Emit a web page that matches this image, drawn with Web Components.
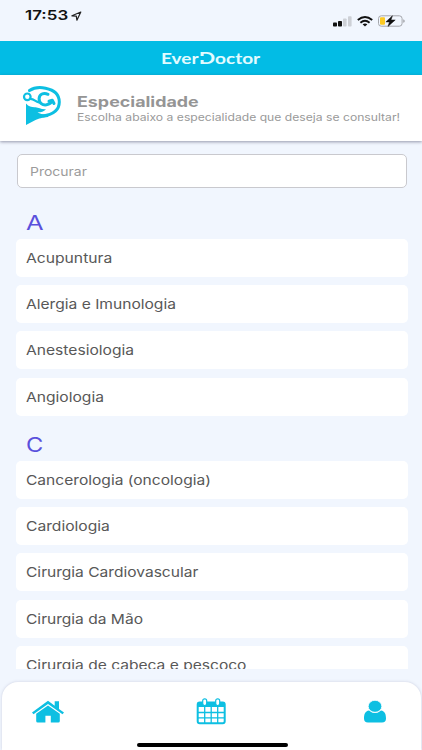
<!DOCTYPE html>
<html lang="pt-BR">
<head>
<meta charset="utf-8">
<meta name="viewport" content="width=device-width, initial-scale=1">
<title>EverDoctor</title>
<style>
  body {
    margin: 0;
    background-color: #f1f6fe;
    font-family: Inter, "Liberation Sans", sans-serif;
    color: #585858;
  }
</style>
</head>
<body>
<doctor-app></doctor-app>

<script>
// Text drawn wider than the font, up to the given width in pixels
class WideText extends HTMLElement {
  constructor() {
    super();
    this.shadowDOM = this.attachShadow({ mode: "open" });
  }

  connectedCallback() {
    this.shadowDOM.innerHTML = `
    <style>
    :host {
      display: block;
      white-space: nowrap;
    }

    span {
      display: inline-block;
      transform-origin: 0 50%;
    }
    </style>
    <span><slot></slot></span>`;

    const span = this.shadowDOM.querySelector("span");
    const width = Number(this.getAttribute("width"));
    if (width) {
      this.style.width = `${width}px`;
      span.style.transform = `scaleX(${width / span.offsetWidth})`;
    }
  }
}

class StatusBar extends HTMLElement {
  constructor() {
    super();
    this.shadowDOM = this.attachShadow({ mode: "open" });
  }

  connectedCallback() {
    this.shadowDOM.innerHTML = `
    <style>
    :host {
      display: flex;
      flex: none;
      justify-content: space-between;
      box-sizing: border-box;
      height: 41px;
      padding: 7px 17px 0 25px;
      color: #111;
    }

    .time {
      display: flex;
      height: 17px;
      align-items: center;
      gap: 3px;
      font-size: 13px;
      font-weight: 600;
      line-height: 17px;
    }

    .icons {
      display: flex;
      height: 12px;
      margin-top: 8px;
      align-items: center;
      gap: 5px;
    }

    svg {
      display: block;
    }
    </style>
    <div class="time">
      <wide-text width="43">17:53</wide-text>
      <svg width="11" height="10" viewBox="0 0 11 10">
        <path d="M.9 4.8 9.8 1 5.9 9.2 5.3 5.2Z" fill="none" stroke="#222" stroke-width="1.2" stroke-linejoin="round"/>
      </svg>
    </div>
    <div class="icons">
      <svg width="19" height="11" viewBox="0 0 19 11">
        <rect x="0" y="6.5" width="4" height="4" rx=".8" fill="#111"/>
        <rect x="5" y="5" width="4" height="5.5" rx=".8" fill="#111"/>
        <rect x="10" y="2.5" width="3.6" height="8" rx=".8" fill="#cdd0d6"/>
        <rect x="15" y="0.3" width="3.6" height="10.2" rx=".8" fill="#cdd0d6"/>
      </svg>
      <svg width="16" height="11" viewBox="0 0 16 11">
        <g fill="none" stroke="#111" stroke-width="1.9">
          <path d="M.8 4Q8-2 15.2 4"/>
          <path d="M3.4 6.7Q8 2.8 12.6 6.7"/>
        </g>
        <path d="M5.6 8.3Q8 6.6 10.4 8.3L8 10.6Z" fill="#111"/>
      </svg>
      <svg width="27" height="12" viewBox="0 0 27 12">
        <rect x=".5" y=".8" width="23.6" height="10.4" rx="2.8" fill="none" stroke="#a4a6ab"/>
        <path d="M25.2 4.2Q26.8 4.6 26.8 6T25.2 7.8Z" fill="#a4a6ab"/>
        <rect x="2" y="2.2" width="5" height="7.6" rx="1" fill="#fcca23"/>
        <path d="M14.4.8 7.9 6.9H11.5L10 11.4 17.2 5H13Z" fill="#111" stroke="#111" stroke-width=".5"/>
      </svg>
    </div>`;
  }
}

class BrandBar extends HTMLElement {
  constructor() {
    super();
    this.shadowDOM = this.attachShadow({ mode: "open" });
  }

  connectedCallback() {
    this.shadowDOM.innerHTML = `
    <style>
    :host {
      display: flex;
      flex: none;
      box-sizing: border-box;
      height: 34px;
      padding-right: 1px;
      align-items: center;
      justify-content: center;
      background-color: #02bce5;
      color: #e2fbff;
      font: 700 15px/20px Lato, sans-serif;
    }

    .d {
      position: relative;
      font-size: 17px;
    }

    /* notch cut in the stem of the D */
    .d::before {
      content: "";
      position: absolute;
      left: 0;
      top: 9px;
      width: 4px;
      height: 4px;
      background-color: #02bce5;
    }
    </style>
    <wide-text width="99">Ever<span class="d">D</span>octor</wide-text>`;
  }
}

class PageHeading extends HTMLElement {
  constructor() {
    super();
    this.shadowDOM = this.attachShadow({ mode: "open" });
  }

  connectedCallback() {
    this.shadowDOM.innerHTML = `
    <style>
    :host {
      display: flex;
      flex: none;
      box-sizing: border-box;
      height: 66px;
      padding: 11px 0 0 22px;
      gap: 16px;
      background-color: #fff;
      box-shadow: 0 1px 3px rgba(60, 60, 90, 0.5);
      color: #999;
    }

    .title {
      margin-top: 7px;
      font-size: 14.5px;
      font-weight: 700;
      line-height: 18px;
      color: #959595;
    }

    .hint {
      font-size: 10.5px;
      line-height: 14px;
    }
    </style>
    <svg width="39" height="40" viewBox="0 0 39 40">
      <g fill="none" stroke="#0dbfe2" stroke-linecap="round" stroke-linejoin="round">
        <circle cx="5.3" cy="10.8" r="3.3" stroke-width="2.2"/>
        <path d="M7.5 4.6C12 1.5 19 1.3 23.500 2.200 32.500 4 37.300 9 37.300 16 37.300 24 31 28.500 21 30" stroke-width="3"/>
        <path d="M26 8.300C21.500 6 17.300 8.500 17.100 12.500 17 17 20.500 19.500 24.500 18.800 27.500 18.200 29.500 16.500 30.300 14.500M27 15.300 30.300 14.300 32 17.500" stroke-width="3"/>
        <path d="M8.500 12.800C12.500 13 13 15.500 17 16.500" stroke-width="2.200"/>
      </g>
      <path d="M4 17.500C7 21 10 21.300 13.500 21.200 17 21.300 19 23.800 24 23.300 21.500 26 18 26.500 15.500 26.300 19 28.500 23 29 27 28.200L26 31C20 31.500 17 32.500 13.500 34L4 39Z" fill="#0dbfe2"/>
    </svg>
    <div>
      <wide-text class="title" width="122">Especialidade</wide-text>
      <wide-text class="hint" width="323">Escolha abaixo a especialidade que deseja se consultar!</wide-text>
    </div>`;
  }
}

class SearchField extends HTMLElement {
  constructor() {
    super();
    this.shadowDOM = this.attachShadow({ mode: "open" });
  }

  connectedCallback() {
    this.shadowDOM.innerHTML = `
    <style>
    :host {
      display: flex;
      flex: none;
      box-sizing: border-box;
      height: 34px;
      margin: 13px 15px 0 17px;
      padding-left: 12px;
      align-items: center;
      border: 1px solid #c9c9ce;
      border-radius: 5px;
      background-color: #fff;
      color: #9b9b9b;
      font-size: 12px;
    }
    </style>
    <wide-text width="57">Procurar</wide-text>`;
  }
}

class SpecialtyItem extends HTMLElement {
  constructor() {
    super();
    this.shadowDOM = this.attachShadow({ mode: "open" });
  }

  connectedCallback() {
    this.shadowDOM.innerHTML = `
    <style>
    :host {
      display: flex;
      box-sizing: border-box;
      height: 38px;
      padding-left: 10px;
      align-items: center;
      border-radius: 5px;
      background-color: #fff;
      font-size: 13.3px;
    }
    </style>
    <wide-text width="${this.getAttribute("width")}"><slot></slot></wide-text>`;
  }
}

class SpecialtyGroup extends HTMLElement {
  constructor() {
    super();
    this.shadowDOM = this.attachShadow({ mode: "open" });
  }

  connectedCallback() {
    this.shadowDOM.innerHTML = `
    <style>
    :host {
      display: flex;
      flex-direction: column;
      gap: 8.2px;
    }

    .letter {
      margin: 0 0 -7.2px 9.5px;
      height: 30px;
      line-height: 30px;
      font-size: 19.5px;
      color: #5a50dc;
    }
    </style>
    <wide-text class="letter" width="17">${this.getAttribute("letter")}</wide-text>
    <slot></slot>`;
  }
}

class TabBar extends HTMLElement {
  constructor() {
    super();
    this.shadowDOM = this.attachShadow({ mode: "open" });
  }

  connectedCallback() {
    this.shadowDOM.innerHTML = `
    <style>
    :host {
      display: flex;
      flex: none;
      flex-direction: column;
      justify-content: space-between;
      box-sizing: border-box;
      height: 68px;
      margin: 13px 1px 0 2px;
      padding: 16px 34px 3px 30px;
      border-radius: 16px 16px 0 0;
      background-color: #fff;
      box-shadow: 0 0 3px rgba(90, 90, 130, 0.25);
    }

    nav {
      display: flex;
      align-items: center;
    }

    svg {
      display: block;
    }

    .calendar {
      margin: 0 138px 0 132px;
    }

    .indicator {
      width: 151px;
      height: 4.5px;
      margin-left: 104.5px;
      border-radius: 3px;
      background-color: #000;
    }
    </style>
    <nav>
      <svg width="32" height="23" viewBox="0 0 32 23" fill="#0dbfe2">
        <path d="M16 .8 22.7 5.8V1.2H27V9L32 12.5 30.5 14.2 16 3.9 1.5 14.2 0 12.5Z"/>
        <path d="M16 5.4 27.8 13.8V21Q27.8 22.5 26.3 22.5H18.8V15.8H13.4V22.5H5.7Q4.2 22.5 4.2 21V13.8Z"/>
      </svg>
      <svg class="calendar" width="30" height="27" viewBox="-.7 0 30 27">
        <rect x="1" y="4.5" width="27" height="20.8" rx="2" fill="#fff" stroke="#0dbfe2" stroke-width="2"/>
        <path d="M1 4.500H28V9H1Z" fill="#0dbfe2"/>
        <path d="M8 9V25M14.500 9V25M21 9V25M1 14.500H28M1 19.800H28" stroke="#0dbfe2" stroke-width="1.300"/>
        <g fill="#fff" stroke="#0dbfe2" stroke-width="1.200">
          <rect x="6" y=".8" width="4" height="6.700" rx="1.900"/>
          <rect x="19" y=".8" width="4" height="6.700" rx="1.900"/>
        </g>
      </svg>
      <svg width="22" height="23" viewBox="0 0 22 23" fill="#0dbfe2">
        <path d="M5 10.5C1 11 0 14.5 0 18.5Q0 22.5 4 22.5H18Q22 22.5 22 18.5C22 14.5 21 11 17 10.5Q14 13 11 13T5 10.5Z"/>
        <ellipse cx="11" cy="6.3" rx="6.8" ry="6" stroke="#fff" stroke-width=".8"/>
      </svg>
    </nav>
    <div class="indicator"></div>`;
  }
}

class DoctorApp extends HTMLElement {
  constructor() {
    super();
    this.shadowDOM = this.attachShadow({ mode: "open" });
  }

  connectedCallback() {
    this.shadowDOM.innerHTML = `
    <style>
    :host {
      display: flex;
      flex-direction: column;
      height: 750px;
      overflow: hidden;
    }

    .list {
      display: flex;
      flex: 1;
      flex-direction: column;
      min-height: 0;
      margin-top: 20px;
      padding: 0 14px 0 16px;
      gap: 14.4px;
      overflow: hidden;
    }
    </style>
    <status-bar></status-bar>
    <brand-bar></brand-bar>
    <page-heading></page-heading>
    <search-field></search-field>
    <div class="list">
      <specialty-group letter="A">
        <specialty-item width="86">Acupuntura</specialty-item>
        <specialty-item width="150">Alergia e Imunologia</specialty-item>
        <specialty-item width="108">Anestesiologia</specialty-item>
        <specialty-item width="77.5">Angiologia</specialty-item>
      </specialty-group>
      <specialty-group letter="C">
        <specialty-item width="185">Cancerologia (oncologia)</specialty-item>
        <specialty-item width="83.5">Cardiologia</specialty-item>
        <specialty-item width="172">Cirurgia Cardiovascular</specialty-item>
        <specialty-item width="117">Cirurgia da Mão</specialty-item>
        <specialty-item width="220">Cirurgia de cabeça e pescoço</specialty-item>
      </specialty-group>
    </div>
    <tab-bar></tab-bar>`;
  }
}

customElements.define("wide-text", WideText);
customElements.define("status-bar", StatusBar);
customElements.define("brand-bar", BrandBar);
customElements.define("page-heading", PageHeading);
customElements.define("search-field", SearchField);
customElements.define("specialty-item", SpecialtyItem);
customElements.define("specialty-group", SpecialtyGroup);
customElements.define("tab-bar", TabBar);
customElements.define("doctor-app", DoctorApp);
</script>
</body>
</html>
